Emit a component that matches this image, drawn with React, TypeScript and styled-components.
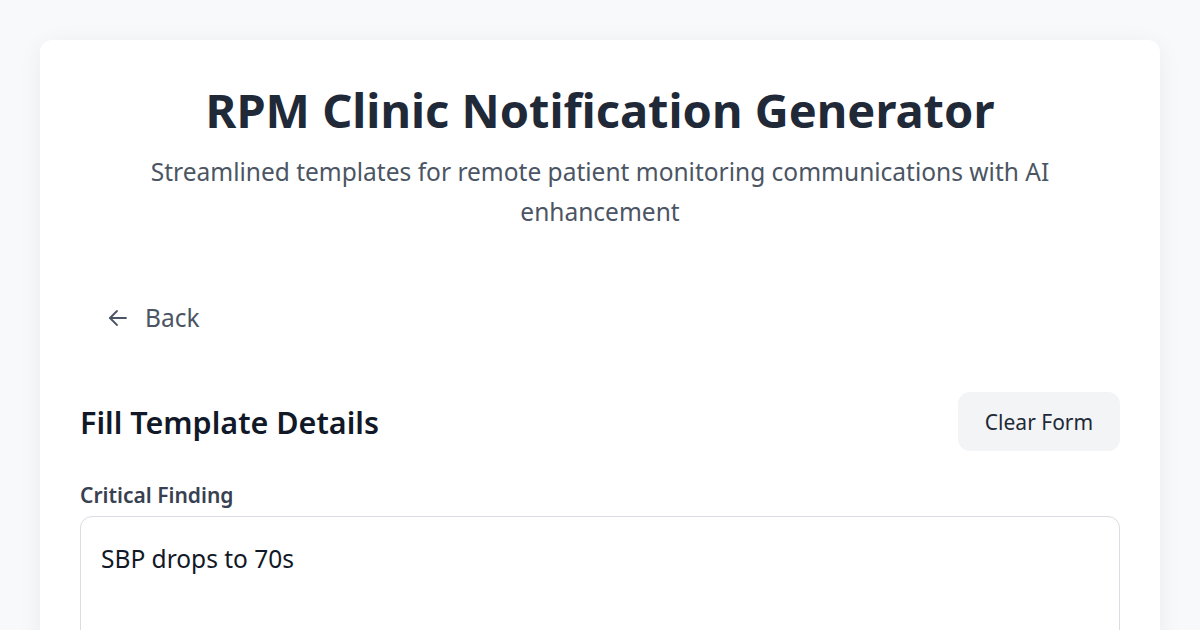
import React, { useState } from 'react';
import styled, { createGlobalStyle } from 'styled-components';

const GlobalStyle = createGlobalStyle`
  * { box-sizing: border-box; }
  body {
    margin: 0;
    background: #f8f9fb;
    font-family: 'Noto Sans', 'Open Sans', sans-serif;
    color: #111827;
  }
`;

const Page = styled.div`
  padding: 40px;
`;

const Card = styled.div`
  background: #ffffff;
  border-radius: 12px;
  box-shadow: 0 4px 24px rgba(17, 24, 39, 0.06);
  padding: 40px;
  min-height: 700px;
`;

const Header = styled.header`
  text-align: center;
  padding-top: 2px;
`;

const Title = styled.h1`
  margin: 0;
  font-size: 47px;
  line-height: 1.2;
  font-weight: 700;
  color: #1f2937;
`;

const Subtitle = styled.p`
  margin: 14px auto 0;
  max-width: 940px;
  font-size: 24.5px;
  line-height: 40px;
  color: #4b5563;
`;

const BackButton = styled.button`
  display: inline-flex;
  align-items: center;
  gap: 15px;
  margin-top: 61px;
  padding: 8px 12px 8px 26px;
  border: none;
  background: transparent;
  font-family: inherit;
  font-size: 24.5px;
  color: #4b5563;
  cursor: pointer;
`;

const SectionHead = styled.div`
  display: flex;
  align-items: center;
  justify-content: space-between;
  margin-top: 50px;
`;

const Heading = styled.h2`
  margin: 0;
  font-size: 30.5px;
  font-weight: 600;
  color: #111827;
`;

const ClearButton = styled.button`
  width: 162px;
  height: 59px;
  padding: 0;
  border: none;
  border-radius: 12px;
  background: #f3f4f6;
  font-family: inherit;
  font-size: 21px;
  color: #1f2937;
  cursor: pointer;
`;

const Field = styled.label`
  display: flex;
  flex-direction: column;
  gap: 7px;
  margin-top: 30px;
`;

const FieldLabel = styled.span`
  font-size: 21px;
  font-weight: 600;
  color: #374151;
`;

const TextArea = styled.textarea`
  width: 100%;
  height: 140px;
  padding: 25px 20px;
  border: 1.5px solid #d9dce1;
  border-radius: 12px;
  resize: none;
  font-family: inherit;
  font-size: 24.5px;
  line-height: 1.4;
  color: #111827;
  outline: none;
`;

const ArrowLeft = () => (
  <svg width="24" height="24" viewBox="0 0 24 24" fill="none" stroke="currentColor" strokeWidth="1.8" strokeLinecap="round" strokeLinejoin="round">
    <path d="M20 12H4" />
    <path d="M11 19l-7-7 7-7" />
  </svg>
);

export default function App() {
  const [finding, setFinding] = useState('SBP drops to 70s');

  return (
    <Page>
      <GlobalStyle />
      <Card>
        <Header>
          <Title>RPM Clinic Notification Generator</Title>
          <Subtitle>
            Streamlined templates for remote patient monitoring communications with AI enhancement
          </Subtitle>
        </Header>
        <BackButton>
          <ArrowLeft />
          Back
        </BackButton>
        <SectionHead>
          <Heading>Fill Template Details</Heading>
          <ClearButton onClick={() => setFinding('')}>Clear Form</ClearButton>
        </SectionHead>
        <Field>
          <FieldLabel>Critical Finding</FieldLabel>
          <TextArea value={finding} onChange={(e) => setFinding(e.target.value)} />
        </Field>
      </Card>
    </Page>
  );
}
